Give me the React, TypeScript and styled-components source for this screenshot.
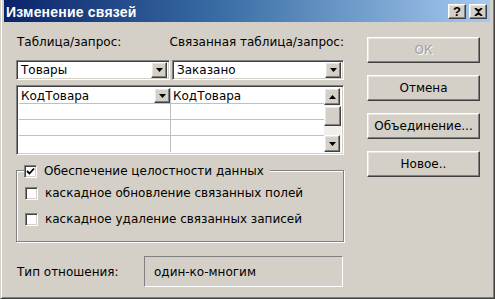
import styled, { createGlobalStyle } from "styled-components";

const GlobalStyle = createGlobalStyle`
  html, body {
    margin: 0;
    padding: 0;
    background: #d4d0c8;
  }
  * {
    box-sizing: border-box;
  }
`;

const FONT = `"DejaVu Sans", "Noto Sans", sans-serif`;

const raised = `
  border: 1px solid;
  border-color: #ffffff #404040 #404040 #ffffff;
  box-shadow: inset -1px -1px 0 #808080, inset 1px 1px 0 #e8e6e1;
`;

const sunken = `
  border: 1px solid;
  border-color: #808080 #ffffff #ffffff #808080;
  box-shadow: inset 1px 1px 0 #404040, inset -1px -1px 0 #d4d0c8;
`;

const Window = styled.div`
  width: 495px;
  height: 299px;
  background: #d4d0c8;
  border: 1px solid;
  border-top: none;
  border-color: #d4d0c8 #404040 #404040 #d4d0c8;
  box-shadow: inset 1px 0 0 #ffffff, inset -1px -1px 0 #808080;
  padding: 0 4px 4px 3px;
  display: flex;
  flex-direction: column;
  font-family: ${FONT};
  font-size: 12px;
  color: #000;
  white-space: nowrap;
`;

const TitleBar = styled.div`
  height: 22px;
  display: flex;
  align-items: center;
  justify-content: space-between;
  padding: 1px 3px 0 2px;
  background: linear-gradient(to right, #0a246a 0%, #3a6ea5 45%, #a6caf0 100%);
`;

const Title = styled.span`
  color: #fff;
  font-family: "Liberation Sans", Arial, sans-serif;
  font-weight: bold;
  font-size: 14px;
  letter-spacing: 0.2px;
`;

const TitleButtons = styled.div`
  display: flex;
  gap: 3px;
`;

const CaptionButton = styled.div`
  width: 18px;
  height: 15px;
  background: #d4d0c8;
  ${raised}
  display: flex;
  align-items: center;
  justify-content: center;
  font-family: "Liberation Sans", Arial, sans-serif;
  font-weight: bold;
  font-size: 13px;
  line-height: 1;
  color: #000;
`;

const Body = styled.div`
  flex: 1;
  display: flex;
  padding: 12px 0 0 12px;
`;

const LeftColumn = styled.div`
  width: 328px;
  display: flex;
  flex-direction: column;
`;

const LabelRow = styled.div`
  display: flex;
  height: 14px;
  align-items: center;
  padding-left: 1px;
  margin-top: 1px;
`;

const LabelCell = styled.span<{ $w?: number }>`
  width: ${(p) => (p.$w ? `${p.$w}px` : "auto")};
`;

const ComboRow = styled.div`
  display: flex;
  gap: 2px;
  margin-top: 11px;
`;

const Combo = styled.div<{ $w: number }>`
  width: ${(p) => p.$w}px;
  height: 20px;
  background: #fff;
  ${sunken}
  display: flex;
  align-items: center;
  padding: 2px;
`;

const ComboText = styled.span`
  flex: 1;
  padding-left: 2px;
`;

const DropButton = styled.div<{ $h?: number }>`
  width: 16px;
  height: ${(p) => p.$h ?? 16}px;
  background: #d4d0c8;
  ${raised}
  display: flex;
  align-items: center;
  justify-content: center;
`;

const Arrow = ({ up }: { up?: boolean }) => (
  <svg width="7" height="4" viewBox="0 0 7 4">
    <path d={up ? "M0 4 L7 4 L3.5 0 Z" : "M0 0 L7 0 L3.5 4 Z"} fill="#000" />
  </svg>
);

const Grid = styled.div`
  margin-top: 5px;
  height: 70px;
  background: #fff;
  ${sunken}
  padding: 2px;
  display: flex;
`;

const GridRows = styled.div`
  flex: 1;
  display: flex;
  flex-direction: column;
`;

const GridRow = styled.div`
  display: flex;
  height: 17px;
  border-bottom: 1px solid #c0c0c0;
  &:last-child {
    border-bottom: none;
  }
`;

const GridCell = styled.div<{ $w?: number }>`
  width: ${(p) => (p.$w ? `${p.$w}px` : "auto")};
  flex: ${(p) => (p.$w ? "none" : 1)};
  display: flex;
  align-items: center;
  padding-left: 2px;
  border-right: ${(p) => (p.$w ? "1px solid #c0c0c0" : "none")};
`;

const Scrollbar = styled.div`
  width: 17px;
  display: flex;
  flex-direction: column;
  background-color: #f1efeb;
`;

const ScrollThumb = styled.div`
  height: 20px;
  margin-top: 1px;
  background: #d4d0c8;
  ${raised}
`;

const ScrollTrack = styled.div`
  flex: 1;
`;

const GroupBox = styled.div`
  position: relative;
  margin-top: 15px;
  height: 72px;
  border: 1px solid #808080;
  box-shadow: 1px 1px 0 #fff, inset 1px 1px 0 #fff;
  padding: 15px 0 0 8px;
  display: flex;
  flex-direction: column;
  gap: 12px;
`;

const Legend = styled.div`
  position: absolute;
  top: -7px;
  left: 7px;
  padding-right: 6px;
  background: #d4d0c8;
`;

const CheckRow = styled.label`
  display: flex;
  align-items: center;
  gap: 7px;
  height: 14px;
`;

const CheckBox = styled.span`
  width: 13px;
  height: 13px;
  background: #fff;
  ${sunken}
  display: flex;
  align-items: center;
  justify-content: center;
`;

const TypeRow = styled.div`
  display: flex;
  align-items: center;
  margin-top: 14px;
`;

const TypeLabel = styled.span`
  width: 128px;
  padding-left: 1px;
`;

const TypeValue = styled.div`
  width: 199px;
  height: 31px;
  border: 1px solid;
  border-color: #808080 #ffffff #ffffff #808080;
  display: flex;
  align-items: center;
  padding-left: 9px;
`;

const RightColumn = styled.div`
  margin-left: 23px;
  margin-top: 3px;
  display: flex;
  flex-direction: column;
  gap: 12px;
`;

const DialogButton = styled.button<{ $disabled?: boolean }>`
  width: 113px;
  height: 26px;
  background: #d4d0c8;
  ${raised}
  font-family: ${FONT};
  font-size: 12px;
  padding: 0;
  color: ${(p) => (p.$disabled ? "#a09d97" : "#000")};
  text-shadow: ${(p) => (p.$disabled ? "1px 1px 0 #fff" : "none")};
`;

const checks = [
  "каскадное обновление связанных полей",
  "каскадное удаление связанных записей",
];

export default function App() {
  return (
    <>
      <GlobalStyle />
      <Window>
        <TitleBar>
          <Title>Изменение связей</Title>
          <TitleButtons>
            <CaptionButton>?</CaptionButton>
            <CaptionButton>
              <svg width="9" height="8" viewBox="0 0 9 8">
                <path d="M1 0 L4.5 3 L8 0 M1 8 L4.5 5 L8 8" stroke="#000" strokeWidth="2" fill="none" />
              </svg>
            </CaptionButton>
          </TitleButtons>
        </TitleBar>
        <Body>
          <LeftColumn>
            <LabelRow>
              <LabelCell $w={154}>Таблица/запрос:</LabelCell>
              <LabelCell>Связанная таблица/запрос:</LabelCell>
            </LabelRow>
            <ComboRow>
              <Combo $w={154}>
                <ComboText>Товары</ComboText>
                <DropButton><Arrow /></DropButton>
              </Combo>
              <Combo $w={172}>
                <ComboText>Заказано</ComboText>
                <DropButton><Arrow /></DropButton>
              </Combo>
            </ComboRow>
            <Grid>
              <GridRows>
                <GridRow>
                  <GridCell $w={152}>
                    <span style={{ flex: 1 }}>КодТовара</span>
                    <DropButton $h={15}><Arrow /></DropButton>
                  </GridCell>
                  <GridCell>КодТовара</GridCell>
                </GridRow>
                {[0, 1, 2].map((i) => (
                  <GridRow key={i}>
                    <GridCell $w={152} />
                    <GridCell />
                  </GridRow>
                ))}
              </GridRows>
              <Scrollbar>
                <DropButton $h={17}><Arrow up /></DropButton>
                <ScrollThumb />
                <ScrollTrack />
                <DropButton $h={17}><Arrow /></DropButton>
              </Scrollbar>
            </Grid>
            <GroupBox>
              <Legend>
                <CheckRow>
                  <CheckBox>
                    <svg width="9" height="9" viewBox="0 0 9 9">
                      <path d="M1 4 L3.5 6.5 L8 1.5" stroke="#000" strokeWidth="1.8" fill="none" />
                    </svg>
                  </CheckBox>
                  Обеспечение целостности данных
                </CheckRow>
              </Legend>
              {checks.map((c) => (
                <CheckRow key={c}>
                  <CheckBox />
                  {c}
                </CheckRow>
              ))}
            </GroupBox>
            <TypeRow>
              <TypeLabel>Тип отношения:</TypeLabel>
              <TypeValue>один-ко-многим</TypeValue>
            </TypeRow>
          </LeftColumn>
          <RightColumn>
            <DialogButton $disabled>ОК</DialogButton>
            <DialogButton>Отмена</DialogButton>
            <DialogButton>Объединение...</DialogButton>
            <DialogButton>Новое..</DialogButton>
          </RightColumn>
        </Body>
      </Window>
    </>
  );
}
